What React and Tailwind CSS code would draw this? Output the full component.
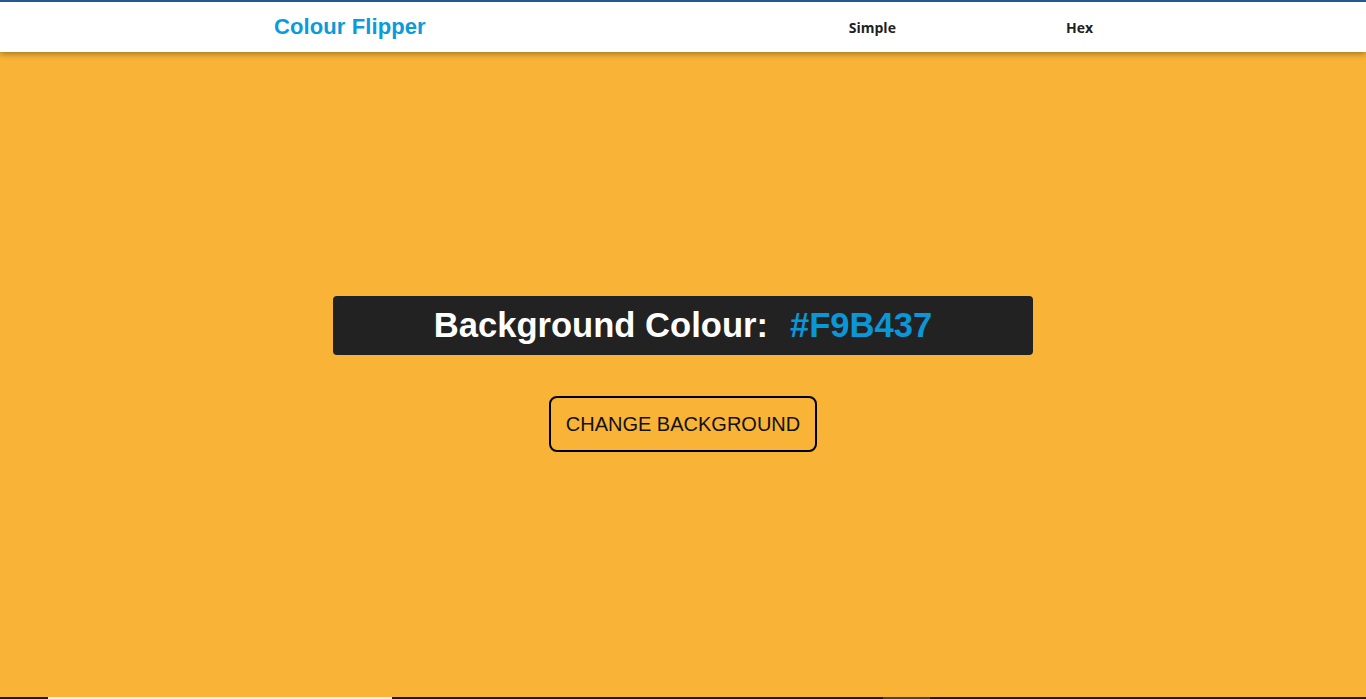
export default function App() {
    return (
        <div className="h-[699px] flex flex-col bg-[#F9B437] overflow-hidden" style={{ fontFamily: '"Liberation Sans", Arial, sans-serif' }}>
            <div className="h-[2px] bg-[#2a5c9a]" />
            <nav className="relative z-10 h-[50px] bg-white shadow-[0_2px_6px_rgba(0,0,0,0.35)]">
                <div className="w-[820px] mx-auto h-full flex items-center">
                    <h4 className="text-[22px] font-bold text-[#0b9bd8] tracking-[0.1px] -mt-[2px] ml-[1px]">Colour Flipper</h4>
                    <ul className="ml-auto flex items-center" style={{ fontFamily: '"Open Sans", "Noto Sans", sans-serif' }}>
                        <li className="mr-[170px] text-[14px] font-bold text-[#1f1f1f]">Simple</li>
                        <li className="text-[14px] font-bold text-[#1f1f1f]">Hex</li>
                    </ul>
                </div>
            </nav>
            <main className="flex-1 flex flex-col items-center justify-center pb-[2px]">
                <div className="w-[700px] h-[59px] rounded-[4px] bg-[#222222] flex items-center justify-center">
                    <h2 className="text-[34.6px] font-bold text-white mt-[2px]">
                        Background Colour:
                        <span className="ml-[22px] text-[#0b96d8]">#F9B437</span>
                    </h2>
                </div>
                <button className="mt-[41px] h-[56px] px-[15px] border-2 border-black rounded-[8px] text-[20px] text-[#111] uppercase">
                    Change Background
                </button>
            </main>
            <div className="h-[2px] flex bg-[#1a1a1a]">
                <div className="w-[48px]" />
                <div className="w-[344px] bg-[#eeeeee]" />
                <div className="w-[491px]" />
                <div className="w-[47px] bg-[#444444]" />
            </div>
        </div>
    );
}
